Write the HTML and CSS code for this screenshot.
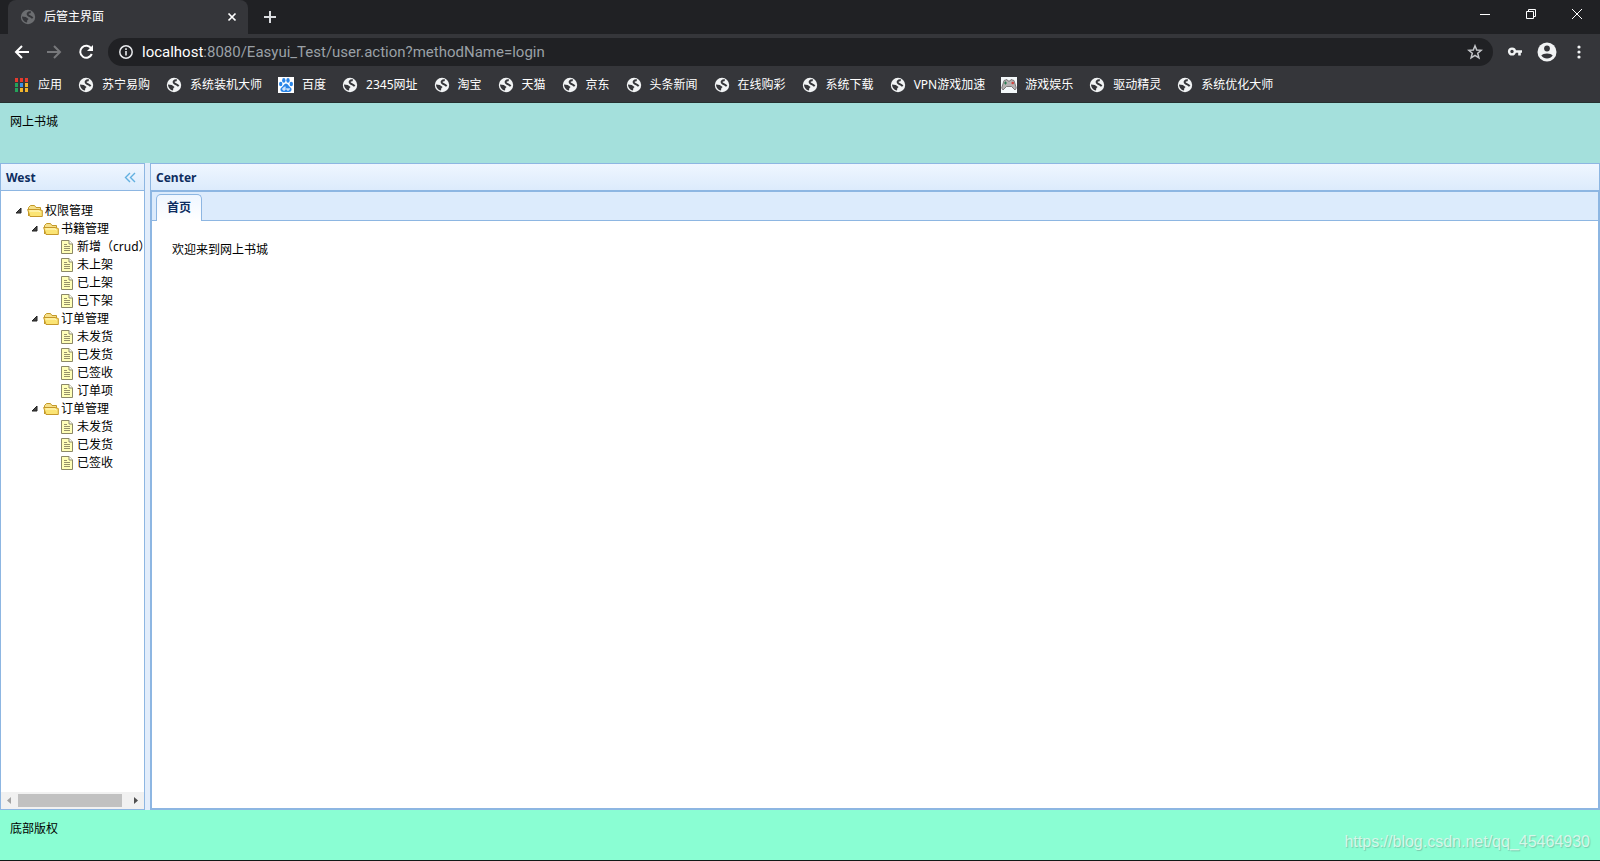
FILE: index.html
```
<!DOCTYPE html>
<html lang="zh-CN">
<head>
<meta charset="utf-8">
<title>后管主界面</title>
<link rel="stylesheet" href="styles.css">
</head>
<body>
<svg class="defs" width="0" height="0" aria-hidden="true">
  <symbol id="globe" viewBox="0 0 16 16"><circle cx="8" cy="8" r="7.200" fill="currentColor"/><path d="M10.800 3.300C8.200 3 6.600 4.800 8.300 6.200S11.500 7.400 12.600 9.200" fill="none" stroke="#35363a" stroke-width="1.900"/><path d="M2 7.600 5.800 8 8.600 9.900 7.300 11.300 7 13.600C4.200 13.300 2.200 10.800 2 7.600Z" fill="#35363a"/></symbol>
  <symbol id="folder" viewBox="0 0 16 16"><path d="M1.500 13V4.500l2-2h4l1.500 2h4.500V7" fill="#f6e08a" stroke="#c39a28"/><path d="M3 13.500 .6 6.500H12l3.300 1V13.500Z" fill="#fbe474" stroke="#c6982a"/><path d="M2.500 8H12l1.500 1" fill="none" stroke="#fffbd0"/></symbol>
  <symbol id="file" viewBox="0 0 16 16"><path d="M2.500 1.500H10L13.500 5V14.500H2.500Z" fill="#ffffb8" stroke="#8b8868"/><path d="M10 1.500V5H13.500" fill="#fff" stroke="#8b8868"/><path d="M5 5.500H8M5 7.500H11M5 9.500H11M5 11.500H11" stroke="#96926a"/></symbol>
  <symbol id="caret" viewBox="0 0 16 16"><path d="M10 5V10H5Z" fill="#444" stroke="#222" stroke-linejoin="round"/></symbol>
</svg>

<header class="browser">
  <div class="tabstrip">
    <div class="browser-tab">
      <svg class="tab-globe" viewBox="0 0 16 16"><use href="#globe"/></svg>
      <span class="tab-title">后管主界面</span>
      <button class="icon-btn" aria-label="关闭标签页"><svg width="16" height="16"><path d="M4.500 4.500 11.500 11.500M11.500 4.500 4.500 11.500" stroke="#fff" stroke-width="1.700"/></svg></button>
    </div>
    <button class="icon-btn new-tab" aria-label="新标签页"><svg width="16" height="16"><path d="M8 2V14M2 8H14" stroke="#dadce0" stroke-width="2"/></svg></button>
    <div class="window-buttons">
      <button class="icon-btn" aria-label="最小化"><svg width="12" height="12"><path d="M1 6.500H11" stroke="#fff"/></svg></button>
      <button class="icon-btn" aria-label="还原"><svg width="12" height="12" fill="none" stroke="#fff"><path d="M1.500 3.500H8.500V10.500H1.500ZM3.500 3.500V1.500H10.500V8.500H8.500"/></svg></button>
      <button class="icon-btn" aria-label="关闭"><svg width="12" height="12"><path d="M1 1 11 11M11 1 1 11" stroke="#fff"/></svg></button>
    </div>
  </div>

  <div class="toolbar">
    <button class="icon-btn" aria-label="后退"><svg width="16" height="16" fill="none" stroke="#fff" stroke-width="2"><path d="M15 8H2M8 2 2 8 8 14"/></svg></button>
    <button class="icon-btn" aria-label="前进"><svg width="16" height="16" fill="none" stroke="#77787b" stroke-width="2"><path d="M1 8H14M8 2 14 8 8 14"/></svg></button>
    <button class="icon-btn" aria-label="刷新"><svg width="16" height="16"><path d="M13.300 4.500A6 6 0 1 0 13.800 10" fill="none" stroke="#fff" stroke-width="2"/><path d="M15 1V7H9Z" fill="#fff"/></svg></button>
    <div class="omnibox">
      <svg width="16" height="16"><circle cx="8" cy="8" r="6.200" fill="none" stroke="#e8eaed" stroke-width="1.500"/><path d="M8 7V11.500M8 4.300V6" stroke="#e8eaed" stroke-width="1.600"/></svg>
      <div class="url" role="textbox" aria-label="地址"><b>localhost</b>:8080/Easyui_Test/user.action?methodName=login</div>
      <button class="icon-btn" aria-label="收藏"><svg width="16" height="16"><path d="M8 1.800 9.700 6 14.200 6.300 10.700 9.200 11.900 13.800 8 11.300 4.100 13.800 5.300 9.200 1.800 6.300 6.300 6Z" fill="none" stroke="#c4c6c9" stroke-width="1.500"/></svg></button>
    </div>
    <div class="actions">
      <button class="icon-btn" aria-label="密码"><svg width="16" height="16"><circle cx="5" cy="7.500" r="2.900" fill="none" stroke="#f1f3f4" stroke-width="2.400"/><path d="M8 7.500H15M12.500 7.500V11.500" fill="none" stroke="#f1f3f4" stroke-width="2.600"/></svg></button>
      <button class="icon-btn" aria-label="用户"><svg width="20" height="20"><circle cx="10" cy="10" r="9.500" fill="#f1f3f4"/><circle cx="10" cy="6.500" r="2.900" fill="#35363a"/><path d="M4.300 13.600C6 10.900 14 10.900 15.700 13.600 14.400 15.500 12.400 16.600 10 16.600S5.600 15.500 4.300 13.600Z" fill="#35363a"/></svg></button>
      <button class="icon-btn" aria-label="菜单"><svg width="16" height="16" fill="#f1f3f4"><circle cx="8" cy="3" r="1.600"/><circle cx="8" cy="8" r="1.600"/><circle cx="8" cy="13" r="1.600"/></svg></button>
    </div>
  </div>

  <nav class="bookmarks">
    <a href="#"><svg viewBox="0 0 16 16"><path d="M1 1h3v4H1zM6 1h3v4H6zM11 1h3v4h-3z" fill="#e53b2e"/><path d="M1 6h3v4H1z" fill="#24a35a"/><path d="M6 6h3v4H6z" fill="#3b8eea"/><path d="M11 6h3v4h-3zM6 11h3v4H6zM11 11h3v4h-3z" fill="#f2b52c"/><path d="M1 11h3v4H1z" fill="#24a35a"/></svg>应用</a>
    <a href="#"><svg><use href="#globe"/></svg>苏宁易购</a>
    <a href="#"><svg><use href="#globe"/></svg>系统装机大师</a>
    <a href="#"><svg viewBox="0 0 16 16"><path fill="#fff" d="M0 0H16V16H0Z"/><g fill="#2a86e8"><ellipse cx="2.700" cy="7" rx="1.700" ry="2.200"/><ellipse cx="5.800" cy="3.400" rx="1.700" ry="2.300"/><ellipse cx="10" cy="3.400" rx="1.700" ry="2.300"/><ellipse cx="13.300" cy="7" rx="1.700" ry="2.200"/><path d="M8 6.500C10 6.500 10.500 9 12.500 10.500 14.500 12 13.500 15 11 15H5C2.500 15 1.500 12 3.500 10.500 5.500 9 6 6.500 8 6.500Z"/></g><path d="M7 9.500V13H5V11H7M9 11V13H11V11" fill="none" stroke="#fff"/></svg>百度</a>
    <a href="#"><svg><use href="#globe"/></svg>2345网址</a>
    <a href="#"><svg><use href="#globe"/></svg>淘宝</a>
    <a href="#"><svg><use href="#globe"/></svg>天猫</a>
    <a href="#"><svg><use href="#globe"/></svg>京东</a>
    <a href="#"><svg><use href="#globe"/></svg>头条新闻</a>
    <a href="#"><svg><use href="#globe"/></svg>在线购彩</a>
    <a href="#"><svg><use href="#globe"/></svg>系统下载</a>
    <a href="#"><svg><use href="#globe"/></svg>VPN游戏加速</a>
    <a href="#"><svg viewBox="0 0 16 16"><path fill="#f4f8fa" d="M0 0H16V16H0Z"/><path d="M3 3.500 6 2.500 7 4H9L10 2.500 13 3.500 15.300 11 14 13 10.500 9.500H5.500L2 13 .7 11Z" fill="#b5b1b1" stroke="#686466" stroke-width=".8"/><path d="M3 6H6M4.500 4.500V7.500" stroke="#277a51"/><circle cx="11.700" cy="6" r="1.300" fill="#d1423d"/></svg>游戏娱乐</a>
    <a href="#"><svg><use href="#globe"/></svg>驱动精灵</a>
    <a href="#"><svg><use href="#globe"/></svg>系统优化大师</a>
  </nav>
</header>

<div class="north">网上书城</div>

<main class="middle">
  <aside class="west">
    <div class="panel-header"><span>West</span><button class="icon-btn" aria-label="折叠"><svg width="16" height="16" fill="none" stroke="#62b0e0" stroke-width="1.400"><path d="M7 3 2.500 7.500 7 12M12 3 7.500 7.500 12 12"/></svg></button></div>
    <div class="west-body">
      <ul class="tree">
        <li><div class="node"><svg><use href="#caret"/></svg><svg class="folder"><use href="#folder"/></svg>权限管理</div>
          <ul>
            <li><div class="node"><svg><use href="#caret"/></svg><svg class="folder"><use href="#folder"/></svg>书籍管理</div>
              <ul class="leaves">
                <li class="node"><svg><use href="#file"/></svg>新增（crud）</li>
                <li class="node"><svg><use href="#file"/></svg>未上架</li>
                <li class="node"><svg><use href="#file"/></svg>已上架</li>
                <li class="node"><svg><use href="#file"/></svg>已下架</li>
              </ul></li>
            <li><div class="node"><svg><use href="#caret"/></svg><svg class="folder"><use href="#folder"/></svg>订单管理</div>
              <ul class="leaves">
                <li class="node"><svg><use href="#file"/></svg>未发货</li>
                <li class="node"><svg><use href="#file"/></svg>已发货</li>
                <li class="node"><svg><use href="#file"/></svg>已签收</li>
                <li class="node"><svg><use href="#file"/></svg>订单项</li>
              </ul></li>
            <li><div class="node"><svg><use href="#caret"/></svg><svg class="folder"><use href="#folder"/></svg>订单管理</div>
              <ul class="leaves">
                <li class="node"><svg><use href="#file"/></svg>未发货</li>
                <li class="node"><svg><use href="#file"/></svg>已发货</li>
                <li class="node"><svg><use href="#file"/></svg>已签收</li>
              </ul></li>
          </ul></li>
      </ul>
    </div>
    <div class="scrollbar">
      <button class="icon-btn" aria-label="向左滚动"><svg width="17" height="17"><path d="M10 5V12L6 8.500Z" fill="#a3a3a3"/></svg></button>
      <div class="track"><div class="thumb"></div></div>
      <button class="icon-btn" aria-label="向右滚动"><svg width="17" height="17"><path d="M7 5V12L11 8.500Z" fill="#505050"/></svg></button>
    </div>
  </aside>

  <section class="center">
    <div class="panel-header">Center</div>
    <div class="center-body">
      <div class="tabs" role="tablist"><button class="tab" role="tab" aria-selected="true">首页</button></div>
      <div class="tab-panel" role="tabpanel">欢迎来到网上书城</div>
    </div>
  </section>
</main>

<footer class="south">底部版权<span class="watermark">https://blog.csdn.net/qq_45464930</span></footer>
</body>
</html>
```
FILE: styles.css
```
* { box-sizing: border-box; }
body {
  margin: 0;
  height: 100vh;
  display: flex;
  flex-direction: column;
  overflow: hidden;
  font: 12px/18px "Noto Sans", "Noto Sans CJK SC", sans-serif;
  color: #000;
  background: #e2edfb;
  border-bottom: 1px solid #101b18;
}
svg { display: block; flex: none; }
.defs { position: absolute; }
ul { list-style: none; margin: 0; padding: 0; }
.icon-btn {
  display: grid;
  place-items: center;
  flex: none;
  padding: 0;
  border: 0;
  background: none;
}

.browser { background: #35363a; color: #fff; border-bottom: 1px solid #25302f; }
.tabstrip { display: flex; height: 34px; background: #202124; padding-left: 8px; }
.browser-tab {
  display: flex;
  align-items: center;
  width: 240px;
  padding: 0 8px 0 12px;
  background: #35363a;
  border-radius: 8px 8px 0 0;
}
.tab-globe { width: 16px; height: 16px; color: #6c6e71; }
.tab-title { flex: 1; padding-left: 8px; }
.new-tab { width: 44px; }
.window-buttons { display: flex; margin-left: auto; height: 28px; }
.window-buttons .icon-btn { width: 46px; }

.toolbar { display: flex; align-items: center; height: 36px; padding: 0 13px 0 14px; }
.toolbar > .icon-btn { margin-right: 16px; }
.toolbar > .icon-btn:nth-child(3) { margin-right: 14px; }
.actions { display: flex; align-items: center; gap: 14px; }
.omnibox {
  flex: 1;
  display: flex;
  align-items: center;
  gap: 8px;
  height: 28px;
  padding: 0 10px;
  margin-right: 14px;
  border-radius: 14px;
  background: #202124;
}
.url { flex: 1; font: 15px/20px Roboto, sans-serif; color: #9aa0a6; }
.url b { font-weight: 400; color: #fff; }

.bookmarks { display: flex; align-items: center; gap: 16px; height: 32px; padding: 0 14px 2px; }
.bookmarks a { display: flex; align-items: center; gap: 8px; color: #fff; text-decoration: none; white-space: nowrap; }
.bookmarks svg { width: 16px; height: 16px; color: #f1f3f4; }

.north { height: 60px; padding: 10px; background: #a4e0dc; }
.middle { flex: 1; display: flex; gap: 5px; min-height: 0; }
.west { display: flex; flex-direction: column; width: 145px; border: 1px solid #8db6e2; background: #fff; }
.panel-header {
  display: flex;
  align-items: center;
  justify-content: space-between;
  height: 27px;
  padding: 1px 5px 0;
  font-weight: 700;
  color: #0e2d5f;
  background: linear-gradient(#eff6ff, #dcebfc);
  border-bottom: 1px solid #8db6e2;
}
.west-body { flex: 1; min-height: 0; padding: 11px 0 10px 10px; }
.node { display: flex; align-items: center; height: 18px; white-space: nowrap; }
.node svg { width: 16px; height: 16px; margin-right: 2px; }
.node svg:has(+ svg) { margin-right: 0; }
.tree ul { padding-left: 16px; }
.tree .leaves { padding-left: 32px; }
.scrollbar { display: flex; height: 17px; background: #f1f1f1; }
.track { flex: 1; padding: 2px 0; }
.thumb { width: 95%; height: 13px; background: #c1c1c1; }

.center { flex: 1; display: flex; flex-direction: column; border: 1px solid #8db6e2; background: #fff; }
.center-body { flex: 1; display: flex; flex-direction: column; border: 1px solid #8db6e2; }
.tabs { display: flex; align-items: flex-end; height: 29px; padding-left: 4px; background: #dcebfc; border-bottom: 1px solid #8db6e2; }
.tab {
  height: 27px;
  margin-bottom: -1px;
  padding: 0 10px;
  font: inherit;
  font-weight: 700;
  color: #0e2d5f;
  border: 1px solid #8db6e2;
  border-bottom: 0;
  border-radius: 5px 5px 0 0;
  background: linear-gradient(#eff6ff, #fff);
}
.tab-panel { padding: 20px; }

.south { position: relative; height: 50px; padding: 10px; background: #8afed3; }
.watermark {
  position: absolute;
  right: 10px;
  bottom: 8px;
  font: 16px/20px "Liberation Sans", Arial, sans-serif;
  color: #d5f7e9;
  text-shadow: 1px 1px 1px #79c9ab;
}
```
